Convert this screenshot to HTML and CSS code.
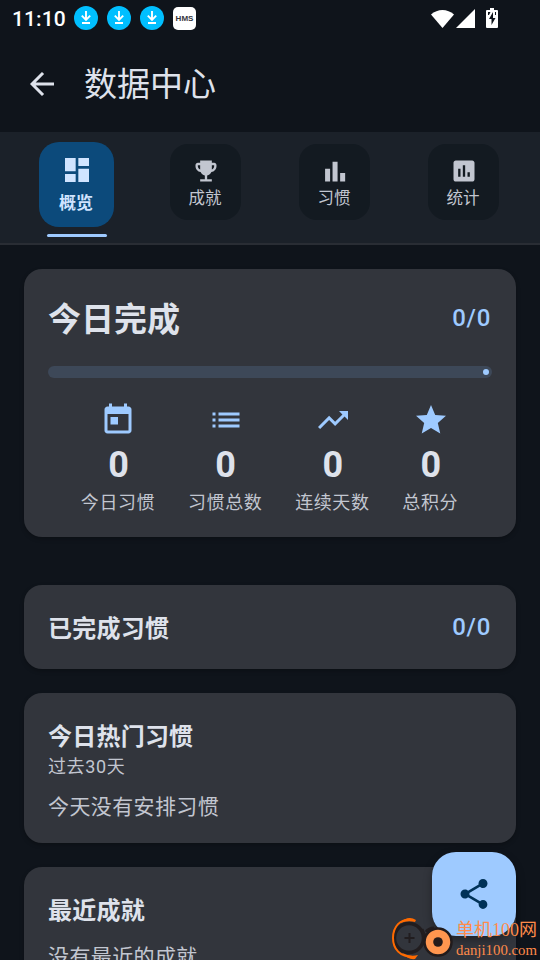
FILE: index.html
```html
<!DOCTYPE html>
<html lang="zh-CN">
<head>
<meta charset="utf-8">
<title>数据中心</title>
<link rel="stylesheet" href="styles.css">
</head>
<body>
<div class="screen">
  <div class="status">
    <span class="clock">11:10</span>
    <div class="notices">
      <svg class="dl" viewBox="0 0 24 24"><circle cx="12" cy="12" r="12" fill="#00bfff"/><path d="M12 5v9M7.800 9.700L12 13.900l4.200-4.200M8 17h8" fill="none" stroke="#fff" stroke-width="1.900"/></svg>
      <svg class="dl" viewBox="0 0 24 24"><circle cx="12" cy="12" r="12" fill="#00bfff"/><path d="M12 5v9M7.800 9.700L12 13.900l4.200-4.200M8 17h8" fill="none" stroke="#fff" stroke-width="1.900"/></svg>
      <svg class="dl" viewBox="0 0 24 24"><circle cx="12" cy="12" r="12" fill="#00bfff"/><path d="M12 5v9M7.800 9.700L12 13.900l4.200-4.200M8 17h8" fill="none" stroke="#fff" stroke-width="1.900"/></svg>
      <span class="hms">HMS</span>
    </div>
    <svg class="signals" viewBox="0 0 70 24" fill="#fff"><path d="M1 6.500C7.500 .5 17.500 .5 24 6.500L12.500 20Z"/><path d="M45 1v19H26Z"/><path fill-rule="evenodd" d="M60 0h4v2h3q1 0 1 1v16q0 1-1 1H57q-1 0-1-1V3q0-1 1-1h3ZM63 4l-4 7h2.500v6l4-7H63ZM58 4v3h1l1.500-3ZM65 4v3h1V4Z"/></svg>
  </div>
  <header class="appbar">
    <svg class="back" viewBox="0 0 24 24" fill="none" stroke="#dee2eb" stroke-width="2"><path d="M20 12H5M12.700 4.700L5.400 12l7.300 7.300"/></svg>
    <h1>数据中心</h1>
  </header>
  <nav class="tabs">
    <div class="tab active">
      <div class="pill"><svg viewBox="0 0 24 24"><path d="M3 13h8V3H3v10zm0 8h8v-6H3v6zm10 0h8V11h-8v10zm0-18v6h8V3h-8z"/></svg><span>概览</span></div>
      <i class="indicator"></i>
    </div>
    <div class="tab"><div class="pill"><svg viewBox="0 0 24 24"><path d="M19 5h-2V3H7v2H5c-1.100 0-2 .9-2 2v1c0 2.550 1.920 4.630 4.390 4.940.63 1.500 1.980 2.630 3.610 2.960V19H7v2h10v-2h-4v-3.100c1.630-.33 2.980-1.460 3.610-2.960C19.080 12.630 21 10.550 21 8V7c0-1.100-.9-2-2-2zM5 8V7h2v3.820C5.840 10.400 5 9.300 5 8zm14 0c0 1.300-.84 2.400-2 2.820V7h2v1z"/></svg><span>成就</span></div></div>
    <div class="tab"><div class="pill"><svg viewBox="0 0 24 24"><path d="M3.500 10h4.300v11H3.500zM9.900 4h4.300v17H9.900zM16.400 13.800h4.300V21h-4.300z"/></svg><span>习惯</span></div></div>
    <div class="tab"><div class="pill"><svg viewBox="0 0 24 24"><path d="M19 3H5c-1.100 0-2 .9-2 2v14c0 1.100.9 2 2 2h14c1.100 0 2-.9 2-2V5c0-1.100-.9-2-2-2zM9 17H7v-7h2v7zm4 0h-2V7h2v10zm4 0h-2v-4h2v4z"/></svg><span>统计</span></div></div>
  </nav>
  <main class="content">
    <section class="card today">
      <div class="row"><h2 class="big">今日完成</h2><span class="ratio">0/0</span></div>
      <div class="track"><i></i></div>
      <div class="stats">
        <div class="stat"><svg viewBox="0 0 24 24"><path d="M19 3h-1V1h-2v2H8V1H6v2H5c-1.110 0-1.990.9-1.990 2L3 19c0 1.100.89 2 2 2h14c1.100 0 2-.9 2-2V5c0-1.100-.9-2-2-2zm0 16H5V8h14v11zM7 10h5v5H7z"/></svg><b>0</b><span>今日习惯</span></div>
        <div class="stat"><svg viewBox="0 0 24 24"><path d="M3 13h2v-2H3v2zm0 4h2v-2H3v2zm0-8h2V7H3v2zm4 4h14v-2H7v2zm0 4h14v-2H7v2zM7 7v2h14V7H7z"/></svg><b>0</b><span>习惯总数</span></div>
        <div class="stat"><svg viewBox="0 0 24 24"><path d="M16 6l2.290 2.290-4.880 4.880-4-4L2 16.590 3.410 18l6-6 4 4 6.300-6.290L22 12V6z"/></svg><b>0</b><span>连续天数</span></div>
        <div class="stat"><svg viewBox="0 0 24 24"><path d="M12 17.270L18.180 21l-1.640-7.030L22 9.240l-7.190-.61L12 2 9.190 8.630 2 9.240l5.460 4.730L5.820 21z"/></svg><b>0</b><span>总积分</span></div>
      </div>
    </section>
    <section class="card done"><div class="row"><h2>已完成习惯</h2><span class="ratio">0/0</span></div></section>
    <section class="card hot"><h2>今日热门习惯</h2><p class="sub">过去30天</p><p class="empty">今天没有安排习惯</p></section>
    <section class="card recent"><h2>最近成就</h2><p class="empty">没有最近的成就</p></section>
  </main>
  <div class="fab"><svg viewBox="0 0 24 24"><path d="M18 16.080c-.76 0-1.440.3-1.960.77L8.910 12.700c.05-.23.09-.46.09-.7s-.04-.47-.09-.7l7.050-4.110c.54.5 1.250.81 2.040.81 1.660 0 3-1.340 3-3s-1.340-3-3-3-3 1.340-3 3c0 .24.04.47.09.7L8.040 9.810C7.500 9.310 6.790 9 6 9c-1.660 0-3 1.340-3 3s1.340 3 3 3c.79 0 1.500-.31 2.040-.81l7.120 4.160c-.05.21-.08.43-.08.65 0 1.610 1.310 2.920 2.920 2.920s2.920-1.310 2.920-2.920-1.310-2.920-2.920-2.920z"/></svg></div>
  <div class="mark">
    <svg viewBox="0 0 64 44" fill="none"><circle cx="19" cy="22" r="14.500" stroke="#211d1f" stroke-width="3.500"/><path d="M19.500 17v10M14.500 22h10" stroke="#211d1f" stroke-width="2"/><path d="M22 4C10 2 3 11 3 22s7 19 20 19" stroke="#ff6a00" stroke-width="2"/><path d="M10 7q8-8 16-3l-1 2q-7-2-15 1M12 37q8 4 16 2l-3 4q-7 1-13-6" fill="#ff6a00"/><path d="M32 13q1 5 5 8M36 16q3-4 8-4" stroke="#211d1f" stroke-width="3"/><circle cx="48" cy="26" r="13.500" fill="#ff964f" stroke="#211b1c" stroke-width="2.500"/><circle cx="48" cy="26" r="4.800" fill="#251b1a"/></svg>
    <div class="marktext"><span class="cn">单机100网</span><span class="url">danji100.com</span></div>
  </div>
</div>
</body>
</html>
```
FILE: styles.css
```css
* { box-sizing: border-box; margin: 0; padding: 0; }
body { background: #0f141b; font-family: Roboto, "Noto Sans CJK SC", sans-serif; color: #dee2eb; }
svg { display: block; flex: none; }
.screen { position: relative; width: 540px; height: 960px; overflow: hidden; background: #0f141b; }
.status { display: flex; align-items: center; height: 36px; padding-left: 12px; }
.clock { width: 62px; font-size: 21px; line-height: 36px; font-weight: 500; letter-spacing: .1px; color: #fff; padding-top: 1px; }
.notices { display: flex; align-items: center; gap: 9px; height: 37px; }
.dl { width: 24px; height: 24px; }
.hms { width: 23px; height: 23px; border-radius: 5px; background: #fff; color: #34343c; font: bold 8px/23px "Liberation Sans", sans-serif; text-align: center; }
.signals { width: 70px; height: 24px; margin: 3px 40px 0 auto; }
.appbar { display: flex; align-items: center; height: 96px; padding-left: 24px; gap: 24px; }
.back { width: 36px; height: 36px; }
h1 { font-size: 33px; font-weight: 400; line-height: 48px; padding-top: 2px; }
.tabs { display: grid; grid-template-columns: repeat(4, 129px); height: 113px; padding: 10px 12px 0; background: #1b2129; border-bottom: 2px solid #292d34; }
.tab { display: flex; flex-direction: column; align-items: center; padding-top: 2px; }
.pill { display: flex; flex-direction: column; align-items: center; width: 71px; height: 76px; padding-top: 13px; border-radius: 18px; background: #131a21; color: #c2c6d0; }
.pill svg { width: 28px; height: 28px; fill: #c2c6d0; }
.pill span { font-size: 16.500px; line-height: 24px; padding-top: 2px; margin-left: -1px; }
.active { padding-top: 0; }
.active .pill { width: 75px; height: 85px; padding-top: 12px; background: #0c4a7b; color: #d0e4ff; border-radius: 20px; }
.active .pill svg { width: 32px; height: 32px; fill: #d0e4ff; }
.active .pill span { font-weight: 700; font-size: 17px; line-height: 30px; }
.indicator { width: 60px; height: 3px; margin-top: 7px; border-radius: 1.500px; background: #9ecaff; }
.content { display: flex; flex-direction: column; gap: 24px; padding: 24px; }
.card { background: #32353c; border-radius: 18px; padding: 24px; box-shadow: 0 2px 4px rgba(0,0,0,.25); flex: none; }
.row { display: flex; justify-content: space-between; align-items: flex-start; }
h2 { font-size: 24px; line-height: 36px; font-weight: 700; letter-spacing: .22px; padding-top: 2px; }
h2.big { font-size: 33px; line-height: 48px; letter-spacing: 0; padding-top: 3px; }
.ratio { font-size: 24px; line-height: 36px; font-weight: 500; letter-spacing: .7px; color: #9ecaff; margin-right: 1px; }
.today .ratio { padding-top: 7px; }
.today { height: 268px; margin-bottom: 24px; }
.track { display: flex; align-items: center; justify-content: flex-end; height: 12px; margin-top: 22px; padding-right: 3px; border-radius: 6px; background: #3d4858; }
.track i { width: 6px; height: 6px; border-radius: 50%; background: #9ecaff; }
.stats { display: flex; justify-content: space-evenly; margin-top: 24px; }
.stat { display: flex; flex-direction: column; align-items: center; }
.stat svg { width: 36px; height: 36px; fill: #9ecaff; }
.stat b { font-size: 36px; line-height: 48px; font-weight: 700; padding-top: 3px; }
.stat span { font-size: 18px; line-height: 24px; letter-spacing: .6px; color: #c2c6d0; padding-top: 2px; margin-left: -1px; }
.done { height: 84px; }
.hot { height: 150px; }
.sub { font-size: 18px; line-height: 24px; letter-spacing: .6px; color: #c2c6d0; }
.empty { font-size: 21px; line-height: 30px; letter-spacing: .38px; margin-top: 13px; color: #c2c6d0; }
.recent { height: 160px; }
.fab { position: absolute; left: 432px; top: 852px; width: 84px; height: 84px; display: flex; align-items: center; justify-content: center; border-radius: 24px; background: #9ecaff; box-shadow: 0 4px 8px rgba(0,0,0,.35); }
.fab svg { width: 36px; height: 36px; fill: #003258; }
.mark { position: absolute; left: 390px; top: 916px; display: flex; }
.mark svg { width: 64px; height: 44px; }
.marktext { display: flex; flex-direction: column; margin-left: 2px; font-family: "Liberation Serif", "Noto Sans CJK SC", serif; color: #ff8b4a; white-space: nowrap; }
.cn { font-size: 18px; line-height: 28px; }
.url { font-size: 14.800px; line-height: 12px; }
```
